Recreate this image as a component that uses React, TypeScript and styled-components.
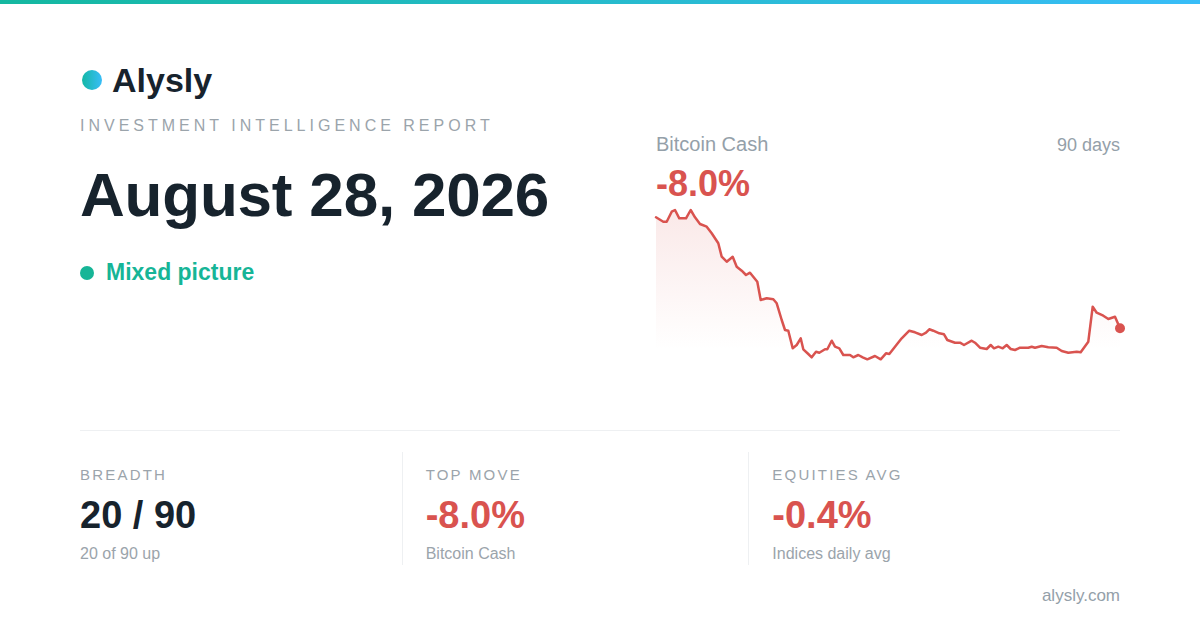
import React from "react";
import styled, { createGlobalStyle } from "styled-components";

const colors = {
  ink: "#17232d",
  muted: "#94a0a9",
  teal: "#16b597",
  red: "#d9534f",
  line: "#eef0f2",
};

const GlobalStyle = createGlobalStyle`
  html, body {
    margin: 0;
    padding: 0;
    background: #ffffff;
  }
  * {
    box-sizing: border-box;
  }
`;

// price series, in page coordinates (x, y)
const series: [number, number][] = [
  [656, 217.3], [663.3, 221.7], [666.7, 221.7], [671.7, 211.7], [675, 210],
  [679.3, 218.3], [686, 218.3], [690.7, 210], [695, 217.3], [700, 224],
  [706.7, 226.7], [711.7, 233.3], [718.3, 243.3], [721.7, 256.7], [726.7, 261.7],
  [732.7, 256.7], [736.7, 266.7], [741.7, 270.7], [746, 275], [750, 272.7],
  [757.3, 281.7], [760.7, 300], [766.7, 298.3], [773.3, 299.3], [776.7, 303.3],
  [781.7, 320], [785, 330], [788.3, 330.7], [792.7, 348.3], [796.7, 345],
  [800.7, 338.3], [803.3, 349.3], [808.3, 354], [811.7, 357.3], [816, 351.7],
  [819.3, 352.7], [825, 349.3], [827.3, 349.3], [831.7, 340.7], [835, 346.7],
  [839.3, 348.3], [843.3, 355], [850, 355], [853.3, 357.3], [858.3, 355],
  [862.7, 357.3], [867.3, 359.3], [875, 356], [880.7, 359.3], [886, 353.3],
  [889.3, 354], [895, 346.7], [901.7, 338.3], [909.3, 330.7], [915, 332.3],
  [921.7, 335], [926, 332.7], [929.3, 329.3], [933.3, 330.7], [939.3, 333.3],
  [944, 334.3], [947.3, 340], [955, 342.7], [960, 342.7], [964, 345],
  [971.7, 340.7], [975, 342.7], [980, 347.7], [986.7, 349], [990.7, 345],
  [994, 348.3], [998.3, 346.7], [1002.7, 348.3], [1006.7, 345], [1010.7, 349],
  [1015, 350], [1020, 347.7], [1028.3, 347.7], [1031.7, 346.7], [1035, 347.7],
  [1041.7, 346], [1048.3, 347.3], [1056.7, 347.7], [1061.7, 351], [1068.3, 352.7],
  [1076.7, 351.7], [1080.7, 352.3], [1088.3, 341.7], [1092.7, 306.7], [1096.7, 312.7],
  [1103.3, 315.7], [1108.3, 319], [1115, 316.7], [1120, 328.3],
];

const stats = [
  { label: "Breadth", value: "20 / 90", note: "20 of 90 up", negative: false },
  { label: "Top move", value: "-8.0%", note: "Bitcoin Cash", negative: true },
  { label: "Equities avg", value: "-0.4%", note: "Indices daily avg", negative: true },
];

const Page = styled.div`
  width: 1200px;
  height: 630px;
  overflow: hidden;
  background: #ffffff;
  font-family: "Liberation Sans", Arial, sans-serif;
  color: ${colors.ink};
`;

const TopBar = styled.div`
  height: 4px;
  background: linear-gradient(90deg, #14b8a0 0%, #38bdf8 100%);
`;

const Content = styled.div`
  padding: 59px 80px 0;
`;

const Hero = styled.div`
  display: flex;
  justify-content: space-between;
  align-items: flex-start;
`;

const Intro = styled.div`
  display: flex;
  flex-direction: column;
`;

const Brand = styled.div`
  display: flex;
  align-items: center;
  gap: 10px;
  margin-left: 2px;
`;

const BrandDot = styled.span`
  width: 20px;
  height: 20px;
  border-radius: 50%;
  background: linear-gradient(90deg, #14b8a6, #38bdf8);
`;

const BrandName = styled.span`
  font-size: 34px;
  line-height: 1;
  font-weight: 700;
`;

const Kicker = styled.div`
  margin-top: 21px;
  font-size: 16px;
  line-height: 1;
  letter-spacing: 4px;
  text-transform: uppercase;
  color: #9ba4ab;
`;

const DateTitle = styled.h1`
  margin: 30px 0 0;
  font-size: 62px;
  line-height: 1;
  font-weight: 700;
  letter-spacing: -0.2px;
`;

const Mood = styled.div`
  margin-top: 35px;
  display: flex;
  align-items: center;
  gap: 12px;
  font-size: 23px;
  line-height: 1;
  font-weight: 700;
  color: ${colors.teal};
`;

const MoodDot = styled.span`
  width: 14px;
  height: 14px;
  border-radius: 50%;
  background: ${colors.teal};
`;

const ChartPanel = styled.div`
  width: 464px;
  margin-top: 71px;
`;

const ChartHead = styled.div`
  display: flex;
  justify-content: space-between;
  align-items: baseline;
`;

const Asset = styled.span`
  font-size: 20px;
  line-height: 1;
  color: ${colors.muted};
`;

const Period = styled.span`
  font-size: 18px;
  line-height: 1;
  color: ${colors.muted};
`;

const Change = styled.div`
  margin-top: 12px;
  font-size: 36px;
  line-height: 1;
  font-weight: 700;
  color: ${colors.red};
`;

const ChartSvg = styled.svg`
  display: block;
  margin: 2px 0 0 -4px;
  overflow: visible;
`;

const Rule = styled.div`
  margin-top: 66px;
  height: 1px;
  background: ${colors.line};
`;

const Stats = styled.div`
  margin-top: 21px;
  display: grid;
  grid-template-columns: repeat(3, 1fr);
`;

const Stat = styled.div`
  padding: 15px 0 3px;

  & + & {
    margin-left: -25px;
    padding-left: 23px;
    border-left: 1px solid ${colors.line};
  }
`;

const StatLabel = styled.div`
  font-size: 15px;
  line-height: 1;
  letter-spacing: 2.2px;
  text-transform: uppercase;
  color: #9ba4ab;
`;

const StatValue = styled.div<{ $negative: boolean }>`
  margin-top: 14px;
  font-size: 38px;
  line-height: 1;
  font-weight: 700;
  color: ${({ $negative }) => ($negative ? colors.red : colors.ink)};
`;

const StatNote = styled.div`
  margin-top: 12px;
  font-size: 16px;
  line-height: 1;
  color: #9ba4ab;
`;

const Footer = styled.div`
  margin-top: 22px;
  text-align: right;
  font-size: 17px;
  line-height: 1;
  color: ${colors.muted};
`;

const PriceChart = () => {
  const line = series.map(([x, y], i) => `${i ? "L" : "M"}${x} ${y}`).join(" ");
  const first = series[0];
  const last = series[series.length - 1];
  const area = `${line} L${last[0]} 364 L${first[0]} 364 Z`;
  return (
    <ChartSvg width={472} height={160} viewBox="652 204 472 160">
      <defs>
        <linearGradient id="fade" x1="0" y1="210" x2="0" y2="350" gradientUnits="userSpaceOnUse">
          <stop offset="0" stopColor={colors.red} stopOpacity={0.13} />
          <stop offset="1" stopColor={colors.red} stopOpacity={0} />
        </linearGradient>
      </defs>
      <path d={area} fill="url(#fade)" />
      <path d={line} fill="none" stroke={colors.red} strokeWidth={2.5} strokeLinejoin="round" strokeLinecap="round" />
      <circle cx={last[0]} cy={last[1]} r={5} fill={colors.red} />
    </ChartSvg>
  );
};

export default function App() {
  return (
    <Page>
      <GlobalStyle />
      <TopBar />
      <Content>
        <Hero>
          <Intro>
            <Brand>
              <BrandDot />
              <BrandName>Alysly</BrandName>
            </Brand>
            <Kicker>Investment Intelligence Report</Kicker>
            <DateTitle>August 28, 2026</DateTitle>
            <Mood>
              <MoodDot />
              Mixed picture
            </Mood>
          </Intro>
          <ChartPanel>
            <ChartHead>
              <Asset>Bitcoin Cash</Asset>
              <Period>90 days</Period>
            </ChartHead>
            <Change>-8.0%</Change>
            <PriceChart />
          </ChartPanel>
        </Hero>
        <Rule />
        <Stats>
          {stats.map((s) => (
            <Stat key={s.label}>
              <StatLabel>{s.label}</StatLabel>
              <StatValue $negative={s.negative}>{s.value}</StatValue>
              <StatNote>{s.note}</StatNote>
            </Stat>
          ))}
        </Stats>
        <Footer>alysly.com</Footer>
      </Content>
    </Page>
  );
}
